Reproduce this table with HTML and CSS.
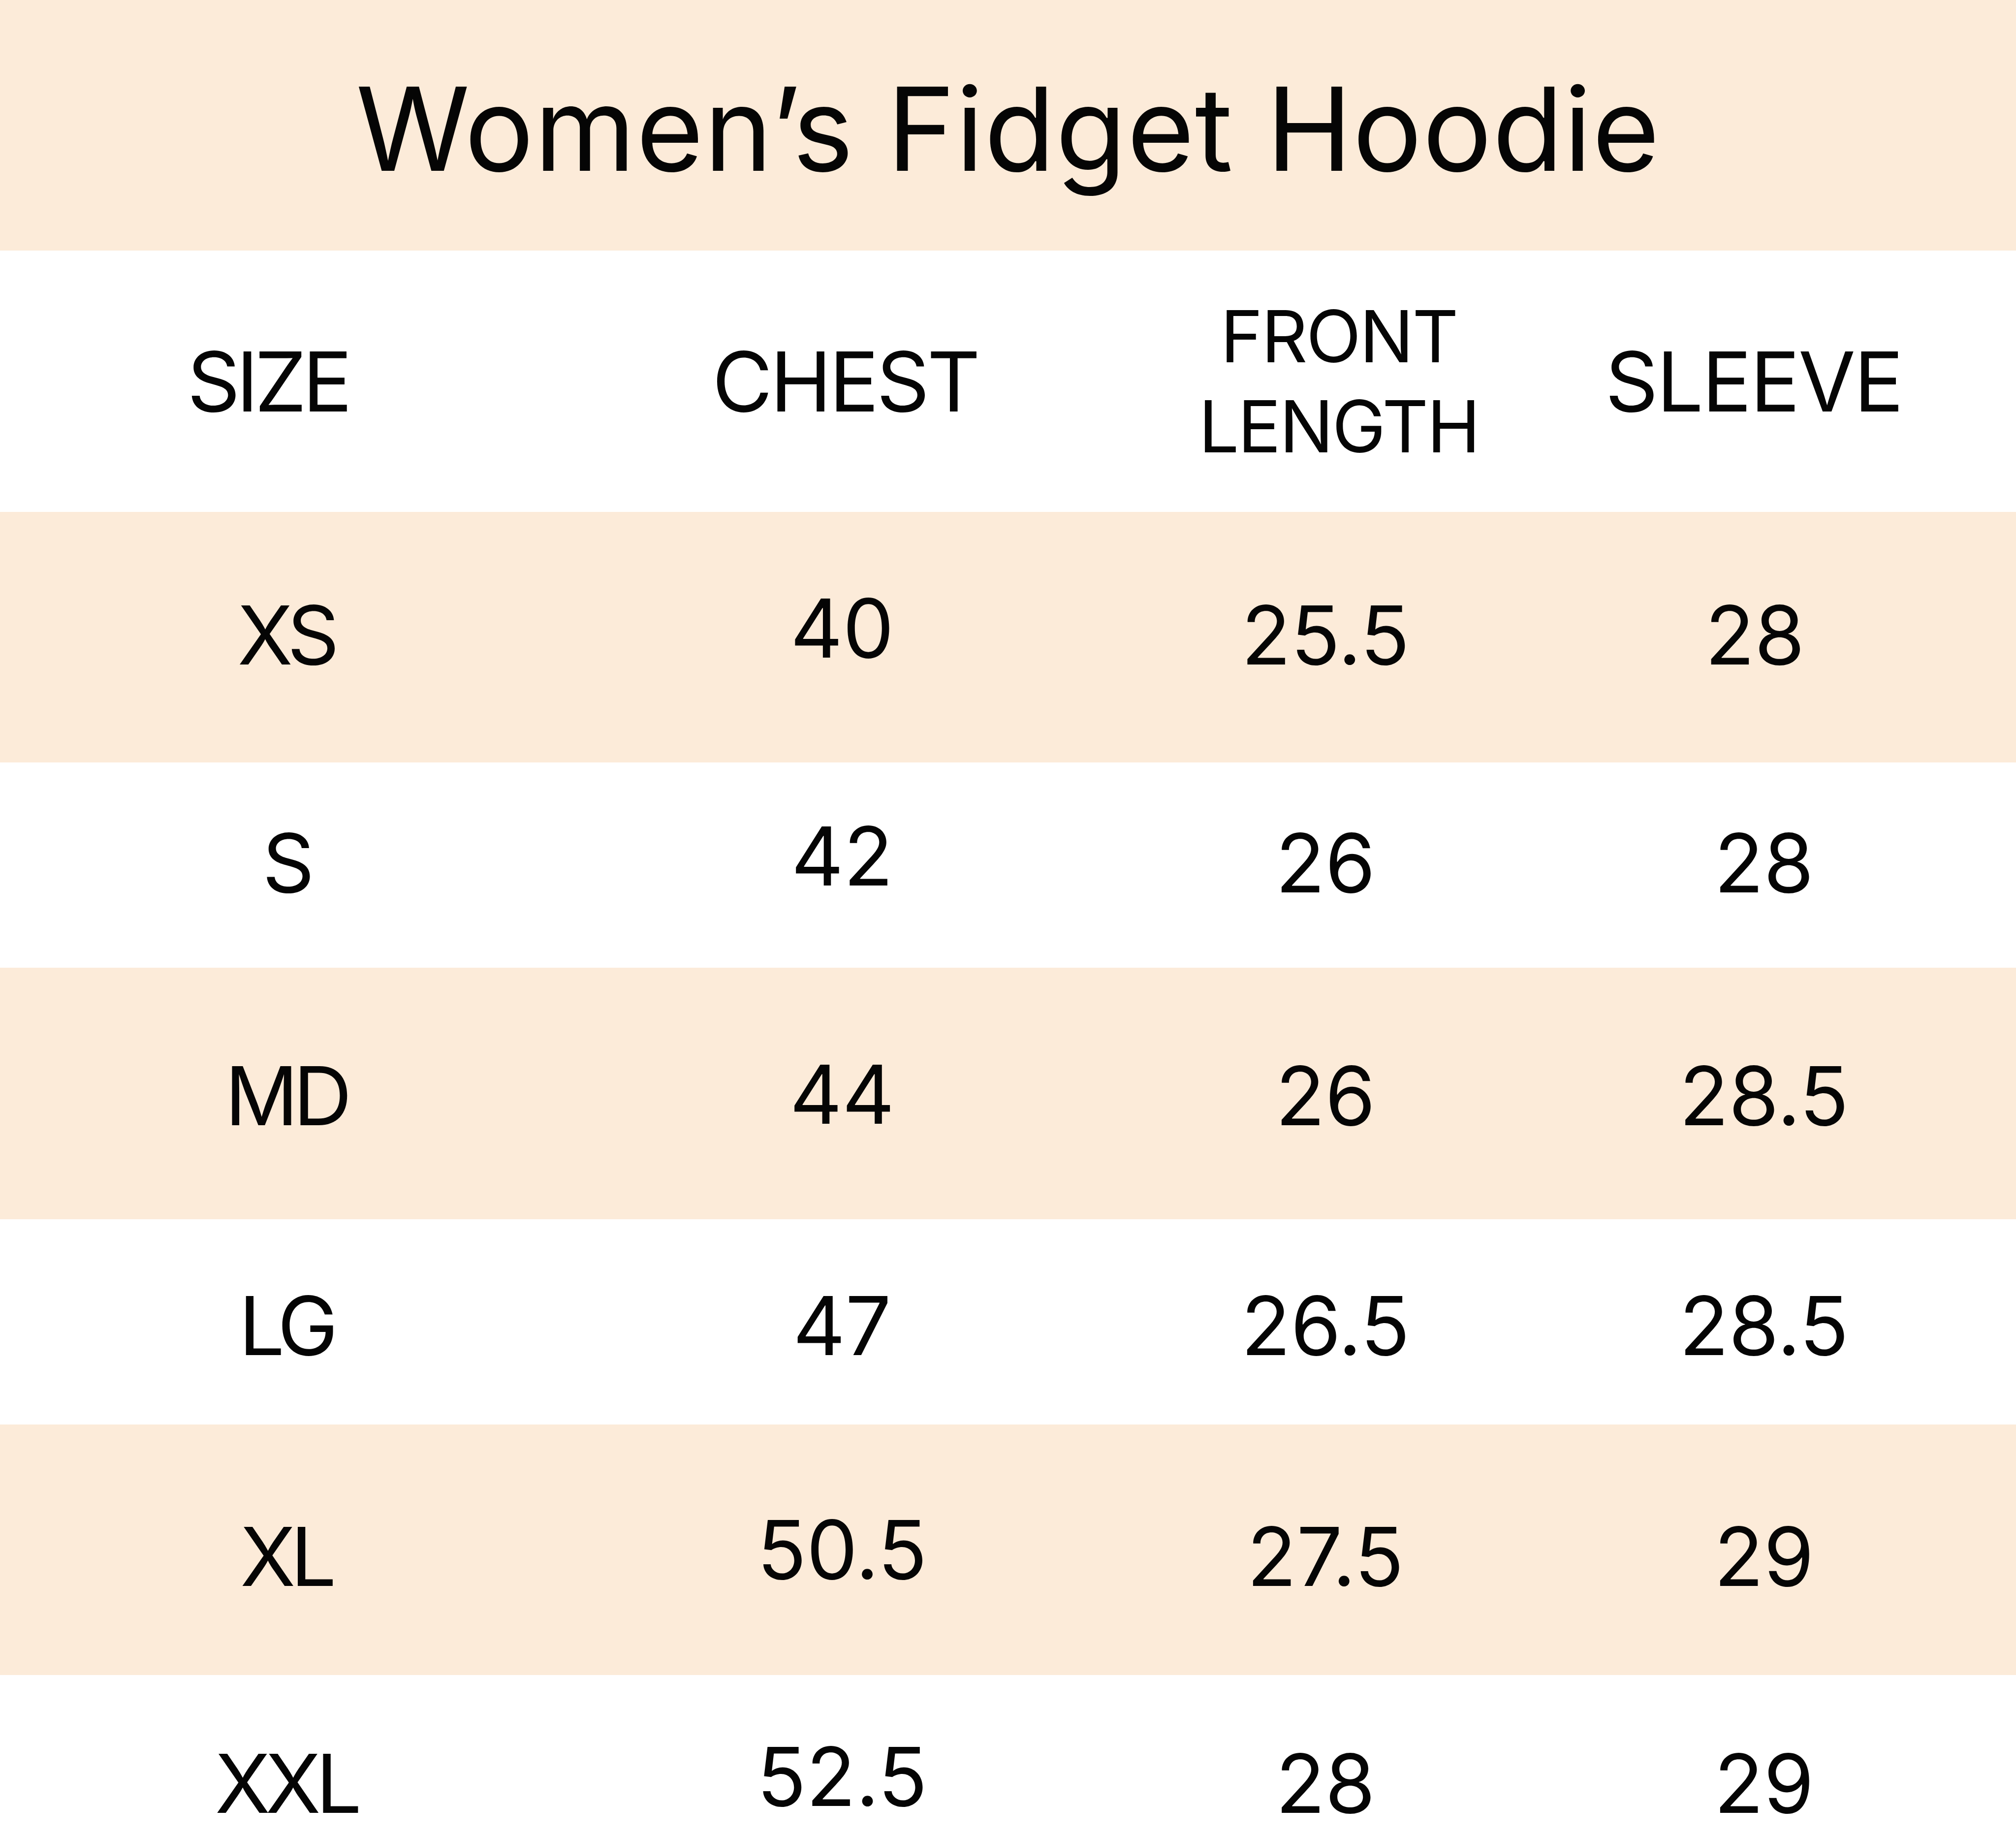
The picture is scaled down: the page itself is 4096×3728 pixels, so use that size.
FILE: index.html
```html
<!DOCTYPE html>
<html lang="en">
<head>
<meta charset="utf-8">
<title>Women’s Fidget Hoodie – Size Chart</title>
<link rel="stylesheet" href="styles.css">
</head>
<body>
<main class="chart">
  <header class="title-band">
    <h1 class="title">Women’s Fidget Hoodie</h1>
  </header>
  <div class="grid head">
    <div class="cell h-size">SIZE</div>
    <div class="cell h-chest">CHEST</div>
    <div class="cell h-front">FRONT<br>LENGTH</div>
    <div class="cell h-sleeve">SLEEVE</div>
  </div>
  <div class="grid row peach row-xs">
    <div class="cell size">XS</div>
    <div class="cell raised">40</div>
    <div class="cell">25.5</div>
    <div class="cell nudge-left">28</div>
  </div>
  <div class="grid row row-s">
    <div class="cell size">S</div>
    <div class="cell raised">42</div>
    <div class="cell">26</div>
    <div class="cell">28</div>
  </div>
  <div class="grid row peach row-md">
    <div class="cell size">MD</div>
    <div class="cell raised-sm">44</div>
    <div class="cell">26</div>
    <div class="cell">28.5</div>
  </div>
  <div class="grid row row-lg">
    <div class="cell size">LG</div>
    <div class="cell">47</div>
    <div class="cell">26.5</div>
    <div class="cell">28.5</div>
  </div>
  <div class="grid row peach row-xl">
    <div class="cell size">XL</div>
    <div class="cell raised">50.5</div>
    <div class="cell">27.5</div>
    <div class="cell">29</div>
  </div>
  <div class="grid row row-xxl">
    <div class="cell size">XXL</div>
    <div class="cell raised">52.5</div>
    <div class="cell">28</div>
    <div class="cell">29</div>
  </div>
</main>
</body>
</html>
```
FILE: styles.css
```css
html, body {
  margin: 0;
  padding: 0;
}
body {
  width: 4096px;
  height: 3728px;
  overflow: hidden;
  background: #ffffff;
  color: #050505;
  font-family: Inter, "Liberation Sans", Arial, sans-serif;
  font-weight: 400;
}
.chart {
  width: 4096px;
}
.title-band {
  height: 509px;
  box-sizing: border-box;
  padding-top: 144px;
  background: #fcebd9;
  display: flex;
  justify-content: center;
}
.title {
  margin: 0;
  font-size: 235px;
  font-weight: 400;
  line-height: 1;
  letter-spacing: 1px;
}
.grid {
  display: grid;
  grid-template-columns: 1162px 1098px 866px 916px;
  box-sizing: border-box;
}
.peach {
  background: #fcebd9;
}
.cell {
  text-align: center;
  line-height: 1;
  white-space: nowrap;
}
/* header row */
.head {
  height: 531px;
  align-items: center;
  font-size: 168px;
  letter-spacing: -5px;
}
.h-size {
  padding-right: 74px;
  letter-spacing: -8px;
}
.h-chest {
  padding-left: 12px;
}
.h-front {
  padding-left: 54px;
  font-size: 146px;
  line-height: 183px;
  letter-spacing: -3px;
}
.h-sleeve {
  padding-right: 42px;
  letter-spacing: -3px;
}
/* data rows */
.row {
  align-items: start;
  font-size: 165px;
}
.size {
  letter-spacing: -10px;
}
.row-xs { height: 509px; padding-top: 168px; }
.row-s { height: 417px; padding-top: 122px; }
.row-md { height: 511px; padding-top: 178px; }
.row-lg { height: 417px; padding-top: 134px; }
.row-xl { height: 509px; padding-top: 186px; }
.row-xxl { height: 324px; padding-top: 138px; }
.raised {
  margin-top: -14px;
}
.raised-sm {
  margin-top: -3px;
}
.nudge-left {
  padding-right: 37px;
}
```
